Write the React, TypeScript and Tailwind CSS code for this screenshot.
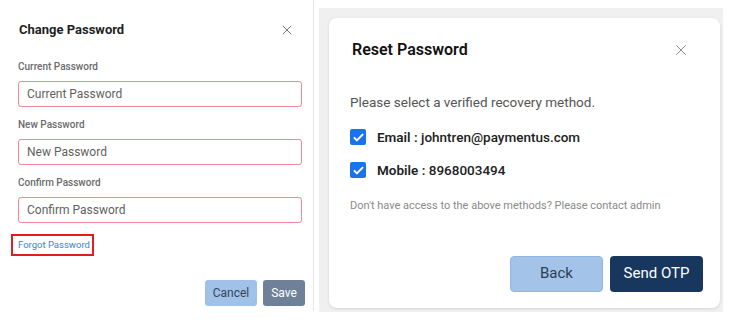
import { X } from "lucide-react";

function Field({ label }: { label: string }) {
  return (
    <div className="flex flex-col">
      <label className="text-[10px] font-medium text-[#6b6b6b] leading-[12px]">{label}</label>
      <input
        readOnly
        placeholder={label}
        className="mt-[8px] h-[26px] w-[284px] rounded-[3px] border border-[#ee8a92] px-[8px] text-[12px] text-[#555] placeholder:text-[#5f5f5f] outline-none"
      />
    </div>
  );
}

function Check() {
  return (
    <span className="flex h-[16px] w-[16px] items-center justify-center rounded-[2px] bg-[#1a73e8]">
      <svg viewBox="0 0 16 16" className="h-[13px] w-[13px]" fill="none">
        <path d="M3 8.5l3 3 7-7" stroke="white" strokeWidth="2.4" strokeLinecap="round" strokeLinejoin="round" />
      </svg>
    </span>
  );
}

function Method({ label, value }: { label: string; value: string }) {
  return (
    <div className="flex items-center gap-[11px]">
      <Check />
      <span className="text-[13.5px] text-[#222]">
        <span className="font-semibold">{label} :</span> <span className="font-medium">{value}</span>
      </span>
    </div>
  );
}

export default function App() {
  return (
    <div
      className="flex h-[323px] w-[737px] bg-white"
      style={{ fontFamily: "Roboto, 'Liberation Sans', sans-serif" }}
    >
      {/* Change Password panel */}
      <div className="flex h-[311px] w-[314px] flex-col border-r border-[#e6e6e6] pl-[18px] pr-[8px]">
        <div className="mt-[21px] flex items-center justify-between pl-[1px] pr-[10px]">
          <h2 className="text-[13px] font-bold text-[#1f1f1f] leading-[18px]">Change Password</h2>
          <X className="h-[16px] w-[16px] text-[#777]" strokeWidth={1.5} />
        </div>
        <div className="mt-[22px] flex flex-col gap-[12px]">
          <Field label="Current Password" />
          <Field label="New Password" />
          <Field label="Confirm Password" />
        </div>
        <div className="mt-[11px] -ml-[7px] flex h-[22px] w-[83px] items-center border-2 border-[#e01e1e] pl-[5px]">
          <span className="whitespace-nowrap text-[9.5px] text-[#3b82e0]">Forgot Password</span>
        </div>
        <div className="mt-[24px] flex justify-end gap-[6px]">
          <button className="h-[26px] w-[52px] rounded-[3px] bg-[#a0c1e8] text-[12px] text-[#34465c]">Cancel</button>
          <button className="h-[26px] w-[42px] rounded-[3px] bg-[#6e8199] text-[12px] text-white">Save</button>
        </div>
      </div>

      {/* Reset Password screenshot */}
      <div className="ml-[5px] mt-[8px] h-[304px] w-[404px] bg-[#f0f0f0] pl-[10px] pt-[10px]">
        <div className="flex h-[290px] w-[391px] flex-col rounded-[8px] bg-white pl-[21px] pr-[17px] shadow-[0_1px_3px_rgba(0,0,0,0.12)]">
          <div className="mt-[22px] flex items-center justify-between pl-[2px] pr-[13px]">
            <h2 className="text-[16px] font-semibold text-[#111] leading-[20px]">Reset Password</h2>
            <X className="h-[18px] w-[18px] text-[#888]" strokeWidth={1.3} />
          </div>
          <p className="mt-[33px] text-[13.5px] text-[#555] leading-[18px]">Please select a verified recovery method.</p>
          <div className="mt-[16px] flex flex-col gap-[13px]">
            <Method label="Email" value="johntren@paymentus.com" />
            <Method label="Mobile" value="8968003494" />
          </div>
          <p className="mt-[18px] text-[11px] text-[#8a8a8a] leading-[14px]">Don&apos;t have access to the above methods? Please contact admin</p>
          <div className="mt-[43px] flex justify-end gap-[7px]">
            <button className="h-[36px] w-[93px] rounded-[4px] border border-[#92b6e2] bg-[#a3c3e8] text-[15px] text-[#2c3e55]">Back</button>
            <button className="h-[36px] w-[93px] rounded-[4px] bg-[#17375e] text-[15px] text-white">Send OTP</button>
          </div>
        </div>
      </div>
    </div>
  );
}
